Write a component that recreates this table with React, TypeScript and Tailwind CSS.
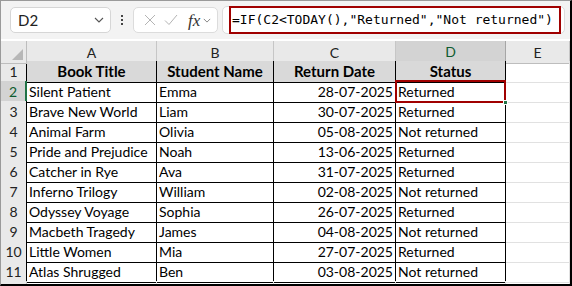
import React from 'react';

type Row = { title: string; student: string; date: string; status: string };

const rows: Row[] = [
  { title: 'Silent Patient', student: 'Emma', date: '28-07-2025', status: 'Returned' },
  { title: 'Brave New World', student: 'Liam', date: '30-07-2025', status: 'Returned' },
  { title: 'Animal Farm', student: 'Olivia', date: '05-08-2025', status: 'Not returned' },
  { title: 'Pride and Prejudice', student: 'Noah', date: '13-06-2025', status: 'Returned' },
  { title: 'Catcher in Rye', student: 'Ava', date: '31-07-2025', status: 'Returned' },
  { title: 'Inferno Trilogy', student: 'William', date: '02-08-2025', status: 'Not returned' },
  { title: 'Odyssey Voyage', student: 'Sophia', date: '26-07-2025', status: 'Returned' },
  { title: 'Macbeth Tragedy', student: 'James', date: '04-08-2025', status: 'Not returned' },
  { title: 'Little Women', student: 'Mia', date: '27-07-2025', status: 'Returned' },
  { title: 'Atlas Shrugged', student: 'Ben', date: '03-08-2025', status: 'Not returned' },
];

const cols = 'grid grid-cols-[26px_130px_117px_122px_110px_1fr]';

const Chevron = ({ className }: { className?: string }) => (
  <svg viewBox="0 0 10 6" className={className} fill="none" stroke="currentColor" strokeWidth="1.1">
    <path d="M1 1l4 4 4-4" />
  </svg>
);

const FormulaBar = () => (
  <div className="h-[38px] bg-[#f3f3f3] flex items-center pl-[9px] pr-[5px] gap-0">
    <div className="w-[101px] h-[26px] bg-white border border-[#d6d6d6] rounded-[5px] flex items-center pl-[7px] pr-[6px]">
      <span className="text-[15px] text-[#222] flex-1">D2</span>
      <Chevron className="w-[10px] h-[6px] text-[#555]" />
    </div>
    <div className="w-[22px] flex flex-col items-center gap-[2px]">
      <span className="w-[2px] h-[2px] bg-[#444]" />
      <span className="w-[2px] h-[2px] bg-[#444]" />
      <span className="w-[2px] h-[2px] bg-[#444]" />
    </div>
    <div className="w-[85px] h-[26px] bg-white border border-[#dcdcdc] rounded-[5px] flex items-center pl-[10px] gap-[8px]">
      <svg viewBox="0 0 12 12" className="w-[12px] h-[12px] text-[#b4b4b4]" fill="none" stroke="currentColor" strokeWidth="1">
        <path d="M1 1l10 10M11 1L1 11" />
      </svg>
      <svg viewBox="0 0 14 12" className="w-[14px] h-[12px] text-[#b4b4b4]" fill="none" stroke="currentColor" strokeWidth="1">
        <path d="M1 6.5l4 4L13 1" />
      </svg>
      <span className="font-['Liberation_Serif',serif] italic text-[17px] text-[#333] leading-none ml-[2px]">fx</span>
      <Chevron className="w-[8px] h-[5px] text-[#777] -ml-[5px]" />
    </div>
    <div className="relative flex-1 h-[28px] ml-[4px] bg-white border border-[#dcdcdc] rounded-[5px] flex items-center">
      <div className="absolute left-[6px] right-[3px] -top-[1px] -bottom-[1px] border-[2.5px] border-[#a00000]" />
      <span className="pl-[9px] font-['DejaVu_Sans_Mono',monospace] text-[13px] text-black whitespace-pre">
        =IF(C2&lt;TODAY(),"Returned","Not returned")
      </span>
    </div>
  </div>
);

const ColumnHeaders = () => (
  <div className={`${cols} h-[22px] bg-white`}>
    <div className="relative bg-[#e9e9e9] border-r border-[#bdbdbd] border-b border-b-[#bdbdbd] mt-[2px]">
      <div className="absolute right-[3px] bottom-[3px] w-0 h-0 border-l-[11px] border-l-transparent border-b-[11px] border-b-[#b7b7b7]" />
    </div>
    {['A', 'B', 'C'].map((c) => (
      <div key={c} className="bg-[#e9e9e9] border-r border-[#c6c6c6] border-b border-b-black mt-[2px] flex items-center justify-center text-[14px] text-[#222]">
        {c}
      </div>
    ))}
    <div className="bg-[#d3d3d3] border-r border-[#a6a6a6] border-b-2 border-b-[#217346] mt-[2px] flex items-center justify-center text-[14px] text-[#0e5c2f]">
      D
    </div>
    <div className="bg-[#e9e9e9] border-r border-[#c6c6c6] border-b border-b-[#bdbdbd] mt-[2px] flex items-center justify-center text-[14px] text-[#222]">
      E
    </div>
  </div>
);

const Cell = ({ children, className = '' }: { children?: React.ReactNode; className?: string }) => (
  <div className={`border-r border-b border-black flex items-center px-[2px] overflow-hidden whitespace-nowrap ${className}`}>
    {children}
  </div>
);

const App: React.FC = () => {
  return (
    <div className="w-[572px] h-[286px] overflow-hidden bg-white border-t border-l border-[#9a9a9a] border-r-2 border-b-2 border-r-black border-b-black flex flex-col font-['Lato','Liberation_Sans',sans-serif] text-black">
      <FormulaBar />
      <ColumnHeaders />

      {/* header row of the table */}
      <div className={`${cols} h-[20px] text-[15px]`}>
        <div className="bg-[#e9e9e9] border-r border-black border-b border-b-[#c6c6c6] flex items-center justify-center text-[14px] text-[#222]">1</div>
        <Cell className="bg-[#d9d9d9] justify-center font-bold">Book Title</Cell>
        <Cell className="bg-[#d9d9d9] justify-center font-bold">Student Name</Cell>
        <Cell className="bg-[#d9d9d9] justify-center font-bold">Return Date</Cell>
        <Cell className="bg-[#d9d9d9] justify-center font-bold">Status</Cell>
        <div className="border-r border-b border-[#e1e1e1]" />
      </div>

      {rows.map((r, i) => {
        const n = i + 2;
        const active = n === 2;
        return (
          <div key={n} className={`${cols} h-[20px] text-[14px]`}>
            <div
              className={`flex items-center justify-center text-[14px] border-b border-b-[#c6c6c6] ${
                active ? 'bg-[#d3d3d3] text-[#0e5c2f] border-r-2 border-r-[#217346]' : 'bg-[#e9e9e9] text-[#222] border-r border-r-black'
              }`}
            >
              {n}
            </div>
            <Cell>{r.title}</Cell>
            <Cell>{r.student}</Cell>
            <Cell className="justify-end">{r.date}</Cell>
            <Cell className={active ? 'relative overflow-visible' : ''}>
              {r.status}
              {active && (
                <>
                  <div className="absolute -left-[1px] -top-[1px] -right-[1px] -bottom-[1px] border-2 border-[#a00000]" />
                  <div className="absolute -right-[3px] -bottom-[3px] w-[5px] h-[5px] bg-[#217346] border border-white" />
                </>
              )}
            </Cell>
            <div className="border-r border-b border-[#e1e1e1]" />
          </div>
        );
      })}

      <div className={`${cols} flex-1`}>
        <div className="bg-[#e9e9e9] border-r border-[#c6c6c6]" />
        <div className="border-r border-[#e1e1e1]" />
        <div className="border-r border-[#e1e1e1]" />
        <div className="border-r border-[#e1e1e1]" />
        <div className="border-r border-[#e1e1e1]" />
        <div className="border-r border-[#e1e1e1]" />
      </div>
    </div>
  );
};

export default App;
